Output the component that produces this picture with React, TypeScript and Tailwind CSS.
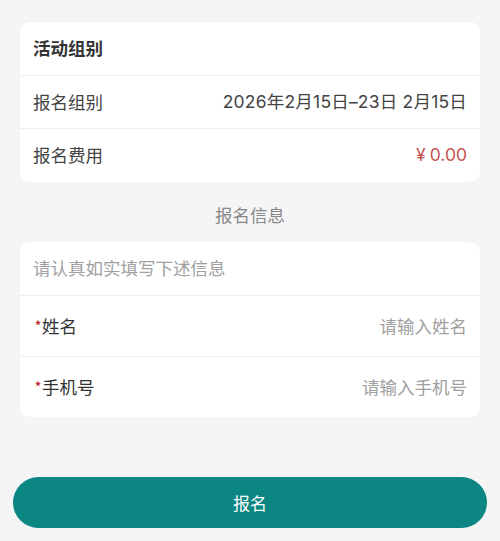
const font = { fontFamily: '"Noto Sans CJK SC", "Noto Sans", sans-serif' };
const numFont = { fontFamily: 'Inter, "Noto Sans CJK SC", sans-serif' };

const InfoRow = ({ label, children, h }: { label: string; children: React.ReactNode; h: string }) => (
  <div className={`flex items-center justify-between border-t border-[#efefef] px-[13px] ${h}`}>
    <span className="text-[17.5px] text-[#444]">{label}</span>
    {children}
  </div>
);

const FieldRow = ({ label, placeholder }: { label: string; placeholder: string }) => (
  <div className="flex h-[61px] items-center justify-between border-t border-[#efefef] px-[13px]">
    <span className="flex items-center text-[17.5px] text-[#333]">
      <span className="ml-[2px] mr-[1px] -mt-[2px] text-[12px] font-bold leading-none text-[#c0272d]">*</span>
      {label}
    </span>
    <input
      placeholder={placeholder}
      className="w-[200px] bg-transparent text-right text-[17.5px] text-[#333] outline-none placeholder:text-[#a0a0a0]"
    />
  </div>
);

export default function App() {
  return (
    <div className="min-h-[541px] w-[500px] bg-[#f5f5f5] pt-[22px]" style={font}>
      <div className="mx-[20px] overflow-hidden rounded-[10px] bg-white">
        <div className="flex h-[53px] items-center px-[13px]">
          <span className="text-[17.5px] font-bold text-[#333]">活动组别</span>
        </div>
        <InfoRow label="报名组别" h="h-[53px]">
          <span className="text-[17.5px] tracking-[0.2px] text-[#444]" style={numFont}>
            2026年2月15日–23日 2月15日
          </span>
        </InfoRow>
        <InfoRow label="报名费用" h="h-[54px]">
          <span className="text-[17.5px] text-[#c45552]" style={numFont}>
            ¥<span className="ml-[4px]">0.00</span>
          </span>
        </InfoRow>
      </div>

      <div className="flex h-[60px] items-center justify-center pt-[6px]">
        <span className="text-[17.5px] text-[#888]">报名信息</span>
      </div>

      <div className="mx-[20px] overflow-hidden rounded-[10px] bg-white">
        <div className="flex h-[53px] items-center px-[13px]">
          <span className="text-[17.5px] text-[#a0a0a0]">请认真如实填写下述信息</span>
        </div>
        <FieldRow label="姓名" placeholder="请输入姓名" />
        <FieldRow label="手机号" placeholder="请输入手机号" />
      </div>

      <div className="mt-[60px] px-[13px]">
        <button className="flex h-[51px] w-full items-center justify-center rounded-full bg-[#0b8683] text-[17px] text-white">
          报名
        </button>
      </div>
    </div>
  );
}
